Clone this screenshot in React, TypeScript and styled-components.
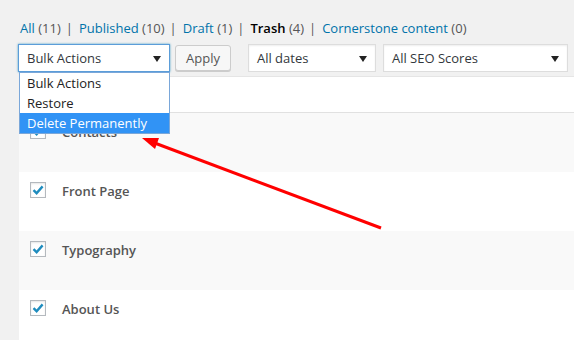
import React from "react";
import styled, { createGlobalStyle } from "styled-components";

const GlobalStyle = createGlobalStyle`
    body {
        margin: 0;
        background: #f1f1f1;
        font-family: "Open Sans", "Segoe UI", sans-serif;
        color: #444;
        overflow: hidden;
    }
`;

const Page = styled.div`
    position: relative;
    width: 574px;
    height: 340px;
    overflow: hidden;
`;

const SubSubSub = styled.ul`
    list-style: none;
    margin: 0;
    padding: 19px 0 0 20px;
    display: flex;
    font-size: 13px;
    line-height: 18px;
    color: #555;
    li + li::before {
        content: "|";
        margin: 0 6px 0 5px;
        color: #555;
    }
    a {
        color: #0073aa;
        text-decoration: none;
    }
    .current {
        color: #000;
        font-weight: 600;
    }
    .count {
        color: #555;
    }
`;

const TableNav = styled.div`
    display: flex;
    align-items: center;
    margin: 7px 0 0 18px;
    height: 28px;
`;

const SelectWrap = styled.div<{ $w: number; $gap?: number }>`
    position: relative;
    width: ${(p) => p.$w}px;
    margin-right: ${(p) => p.$gap ?? 0}px;
`;

const Select = styled.div<{ $focus?: boolean }>`
    box-sizing: border-box;
    height: 28px;
    display: flex;
    align-items: center;
    justify-content: space-between;
    padding: 0 8px 0 8px;
    background: #fff;
    border: 1px solid ${(p) => (p.$focus ? "#5b9dd9" : "#ddd")};
    box-shadow: ${(p) =>
        p.$focus ? "0 0 2px rgba(30,140,190,0.8)" : "inset 0 1px 2px rgba(0,0,0,0.07)"};
    font-size: 13px;
    color: #32373c;
    &::after {
        content: "";
        border-left: 4px solid transparent;
        border-right: 4px solid transparent;
        border-top: 6px solid #222;
        margin-top: 1px;
    }
`;

const Button = styled.div`
    box-sizing: border-box;
    height: 26px;
    padding: 0 10px;
    margin: 0 17px 0 5px;
    display: flex;
    align-items: center;
    font-size: 13px;
    color: #555;
    background: #f7f7f7;
    border: 1px solid #ccc;
    border-radius: 3px;
    box-shadow: 0 1px 0 #ccc;
`;

const Options = styled.ul`
    position: absolute;
    z-index: 3;
    left: 1px;
    top: 28px;
    width: 151px;
    margin: 0;
    padding: 0;
    list-style: none;
    background: #fff;
    border: 1px solid #7aa7d9;
    box-sizing: border-box;
`;

const Option = styled.li<{ $active?: boolean }>`
    height: 20px;
    line-height: 20px;
    padding-left: 7px;
    font-size: 13px;
    color: ${(p) => (p.$active ? "#fff" : "#222")};
    background: ${(p) => (p.$active ? "#3193f5" : "transparent")};
`;

const Table = styled.div`
    margin: 4px 0 0 19px;
    background: #fff;
    border-top: 1px solid #e5e5e5;
`;

const Head = styled.div`
    height: 35px;
    border-bottom: 1px solid #e1e1e1;
`;

const Row = styled.div<{ $alt?: boolean }>`
    height: 59px;
    display: flex;
    align-items: flex-start;
    padding: 10px 0 0 11px;
    box-sizing: border-box;
    background: ${(p) => (p.$alt ? "#f9f9f9" : "#fff")};
`;

const Check = styled.span`
    box-sizing: border-box;
    width: 16px;
    height: 16px;
    border: 1px solid #b4b9be;
    background: #fff;
    box-shadow: inset 0 1px 2px rgba(0, 0, 0, 0.1);
    display: flex;
    align-items: center;
    justify-content: center;
    svg {
        display: block;
    }
`;

const Title = styled.span`
    margin-left: 16px;
    font-size: 13px;
    font-weight: 600;
    color: #555;
    line-height: 18px;
`;

const Arrow = styled.svg`
    position: absolute;
    left: 0;
    top: 0;
    z-index: 4;
    pointer-events: none;
`;

const links = [
    { label: "All", count: 11 },
    { label: "Published", count: 10 },
    { label: "Draft", count: 1 },
    { label: "Trash", count: 4, current: true },
    { label: "Cornerstone content", count: 0 },
];

const rows = ["Contacts", "Front Page", "Typography", "About Us"];

function Tick() {
    return (
        <svg width="12" height="12" viewBox="0 0 12 12">
            <path d="M1.5 6.2 L4.6 9.2 L10.6 2.4" fill="none" stroke="#1e8cbe" strokeWidth="2.4" />
        </svg>
    );
}

export default function App() {
    return (
        <Page>
            <GlobalStyle />
            <SubSubSub>
                {links.map((l) => (
                    <li key={l.label}>
                        {l.current ? (
                            <span className='current'>{l.label}</span>
                        ) : (
                            <a href='#'>{l.label}</a>
                        )}{" "}
                        <span className='count'>({l.count})</span>
                    </li>
                ))}
            </SubSubSub>
            <TableNav>
                <SelectWrap $w={152}>
                    <Select $focus>Bulk Actions</Select>
                    <Options>
                        <Option>Bulk Actions</Option>
                        <Option>Restore</Option>
                        <Option $active>Delete Permanently</Option>
                    </Options>
                </SelectWrap>
                <Button>Apply</Button>
                <SelectWrap $w={128} $gap={7}>
                    <Select>All dates</Select>
                </SelectWrap>
                <SelectWrap $w={185}>
                    <Select>All SEO Scores</Select>
                </SelectWrap>
            </TableNav>
            <Table>
                <Head />
                {rows.map((r, i) => (
                    <Row key={r} $alt={i % 2 === 0}>
                        <Check>
                            <Tick />
                        </Check>
                        <Title>{r}</Title>
                    </Row>
                ))}
            </Table>
            <Arrow width='574' height='340' viewBox='0 0 574 340'>
                <line x1='381' y1='228' x2='152' y2='142' stroke='#ff0000' strokeWidth='3' />
                <polygon points='142,138 159,138 155,149' fill='#ff0000' />
            </Arrow>
        </Page>
    );
}
